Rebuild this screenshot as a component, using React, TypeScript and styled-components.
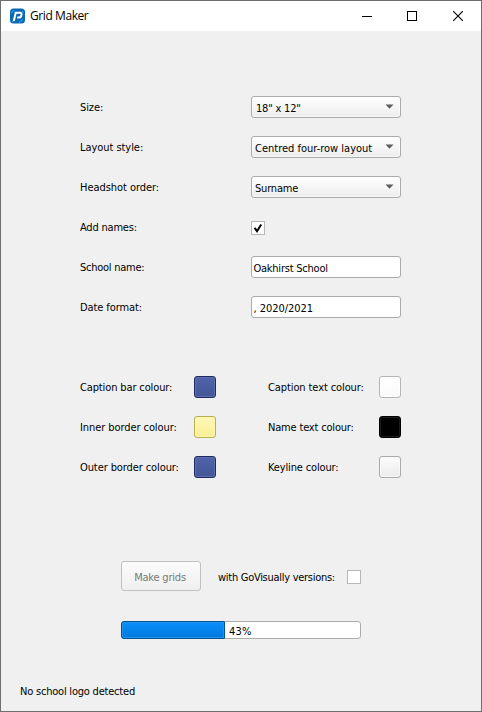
import React from "react";
import styled, { createGlobalStyle } from "styled-components";

const GlobalStyle = createGlobalStyle`
  * { box-sizing: border-box; }
  body { margin: 0; }
`;

const Window = styled.div`
  width: 482px;
  height: 712px;
  display: flex;
  flex-direction: column;
  border: 1px solid #6e6e6e;
  background: #f0f0f0;
  color: #000;
  font: 11px/14px "DejaVu Sans Condensed", "DejaVu Sans", sans-serif;
  font-stretch: condensed;
  white-space: nowrap;
`;

const TitleBar = styled.header`
  height: 30px;
  flex: none;
  display: flex;
  align-items: center;
  padding-left: 9px;
  background: #fff;
`;

const Title = styled.h1`
  flex: 1;
  margin: 0 0 0 5px;
  font: 400 12px/16px "Open Sans", "Noto Sans", sans-serif;
  letter-spacing: -0.42px;
`;

const WindowButton = styled.button<{ $width?: number }>`
  width: ${(p) => p.$width ?? 46}px;
  height: 30px;
  display: grid;
  place-items: center;
  padding: 0;
  border: 0;
  background: none;
`;

const Content = styled.main`
  flex: 1;
  display: flex;
  flex-direction: column;
  padding: 65px 80px 0 79px;
`;

const Form = styled.div`
  display: grid;
  grid-template-columns: 171px 150px;
  grid-auto-rows: 22px;
  row-gap: 18px;
  align-items: center;
`;

const Text = styled.span<{ $track?: number }>`
  letter-spacing: ${(p) => p.$track ?? 0}px;
`;

const Label = styled(Text)`
  padding-top: 2px;
`;

const Combo = styled.button<{ $indent?: number }>`
  height: 22px;
  display: flex;
  align-items: center;
  justify-content: space-between;
  padding: 4px 6px 0 ${(p) => p.$indent ?? 3}px;
  border: 1px solid #ababab;
  border-radius: 3px;
  background: linear-gradient(#fff, #ededed);
  box-shadow: inset 0 0 0 1px rgba(255, 255, 255, 0.5);
  color: #000;
  font: inherit;
  text-align: left;
`;

const Arrow = styled.svg`
  margin-top: -5px;
`;

const Input = styled.input<{ $track?: number }>`
  width: 150px;
  height: 22px;
  padding: 2px 2px 0 ${(p) => (p.$track ? 1.4 : 2)}px;
  border: 1px solid #ababab;
  border-radius: 3px;
  background: #fff;
  color: #000;
  font: inherit;
  letter-spacing: ${(p) => p.$track ?? 0}px;
  outline: none;
`;

const Check = styled.span`
  width: 14px;
  height: 14px;
  display: grid;
  place-items: center;
  margin-top: 2px;
  border: 1px solid #b7b7b7;
  background: #fff;
`;

const Colours = styled.div`
  display: grid;
  grid-template-columns: 114px 74px 111px 22px;
  grid-auto-rows: 22px;
  row-gap: 18px;
  align-items: center;
  margin-top: 58px;
`;

const Swatch = styled.button<{ $top: string; $bottom: string; $edge: string; $inner: string }>`
  width: 22px;
  height: 22px;
  padding: 0;
  border: 1px solid ${(p) => p.$edge};
  border-radius: 3px;
  background: linear-gradient(${(p) => p.$top}, ${(p) => p.$bottom});
  box-shadow: inset 0 0 0 1px ${(p) => p.$inner};
`;

const Actions = styled.div`
  display: flex;
  align-items: center;
  width: 240px;
  margin: 83px 0 0 41px;
`;

const MakeButton = styled.button`
  width: 80px;
  height: 30px;
  margin-right: 17px;
  padding: 3px 2px 0 0;
  border: 1px solid #c0c0c0;
  border-radius: 3px;
  background: linear-gradient(#fbfbfb, #efefef);
  color: #787878;
  font: inherit;
`;

const GoLabel = styled.div`
  flex: 1;
  padding-top: 3px;
`;

const Progress = styled.div`
  width: 240px;
  height: 18px;
  display: flex;
  margin: 30px 0 0 41px;
  border: 1px solid #ababab;
  border-radius: 3px;
  background: #fff;
`;

const Bar = styled.div`
  width: 104px;
  height: 18px;
  margin: -1px 4px 0 -1px;
  border: 1px solid #00528f;
  border-radius: 3px 1px 1px 3px;
  background: linear-gradient(#0a90fc, #0078dc);
  box-shadow: inset 0 0 0 1px #2494ee;
`;

const Percent = styled.span`
  line-height: 20px;
  letter-spacing: 0.2px;
`;

const Status = styled.footer`
  height: 26px;
  flex: none;
  padding-left: 19px;
`;

const BLUE = { $top: "#5164aa", $bottom: "#445698", $edge: "#1c2a60", $inner: "#5d6fae" };
const YELLOW = { $top: "#fff8b8", $bottom: "#f8ee94", $edge: "#b8ae54", $inner: "#fff7ac" };
const WHITE = { $top: "#ffffff", $bottom: "#fafafa", $edge: "#b5b5b5", $inner: "#ffffff" };
const BLACK = { $top: "#000", $bottom: "#000", $edge: "#000", $inner: "#1b1b1b" };
const GREY = { $top: "#fcfcfc", $bottom: "#ececec", $edge: "#ababab", $inner: "#f8f8f8" };

const DropArrow = () => (
  <Arrow width="9" height="5" viewBox="0 0 9 5">
    <path d="M0.5 0.5h8L4.5 4.7z" fill="#5b5b5b" />
  </Arrow>
);

export default function App() {
  return (
    <>
      <GlobalStyle />
      <Window>
        <TitleBar>
          <svg width="15" height="16" viewBox="0 0 15 16">
            <rect y="0.5" width="15" height="15" rx="3.5" fill="#0b69b4" />
            <path d="M1 5l3-3M9 14.5l4-3M12 3l1.5 2M2 13l1.5 1" stroke="#2b9be6" strokeWidth="1.2" />
            <path d="M3.8 13L5.7 4.8H10c1.7 0 1.7 1.2 1.4 2.4-.3 1.5-1 2.4-2.7 2.4H7.2" fill="none" stroke="#fff" strokeWidth="2" />
          </svg>
          <Title>Grid Maker</Title>
          <WindowButton $width={44} aria-label="Minimise">
            <svg width="10" height="10" shapeRendering="crispEdges"><path d="M0 5.5h10" stroke="#000" /></svg>
          </WindowButton>
          <WindowButton aria-label="Maximise">
            <svg width="10" height="10" shapeRendering="crispEdges"><path d="M.5.5h9v9h-9z" fill="none" stroke="#000" /></svg>
          </WindowButton>
          <WindowButton aria-label="Close">
            <svg width="10" height="10"><path d="M0 0l10 10M10 0L0 10" stroke="#000" strokeWidth="1.1" /></svg>
          </WindowButton>
        </TitleBar>
        <Content>
          <Form>
            <Label $track={-0.1}>Size:</Label>
            <Combo $indent={4}><Text $track={-0.2}>18" x 12"</Text><DropArrow /></Combo>
            <Label $track={-0.05}>Layout style:</Label>
            <Combo><Text>Centred four-row layout</Text><DropArrow /></Combo>
            <Label $track={-0.05}>Headshot order:</Label>
            <Combo><Text $track={-0.2}>Surname</Text><DropArrow /></Combo>
            <Label $track={-0.2}>Add names:</Label>
            <Check role="checkbox" aria-checked="true">
              <svg width="10" height="10" viewBox="0 0 10 10">
                <path d="M1.6 4.8L4 8.2 8.2 1.5" fill="none" stroke="#000" strokeWidth="2" />
              </svg>
            </Check>
            <Label $track={-0.25}>School name:</Label>
            <Input $track={-0.22} defaultValue="Oakhirst School" />
            <Label $track={-0.1}>Date format:</Label>
            <Input $track={-0.02} defaultValue=", 2020/2021" />
          </Form>
          <Colours>
            <Label $track={-0.13}>Caption bar colour:</Label><Swatch {...BLUE} />
            <Label $track={-0.1}>Caption text colour:</Label><Swatch {...WHITE} />
            <Label $track={-0.08}>Inner border colour:</Label><Swatch {...YELLOW} />
            <Label $track={-0.18}>Name text colour:</Label><Swatch {...BLACK} />
            <Label $track={-0.1}>Outer border colour:</Label><Swatch {...BLUE} />
            <Label $track={-0.15}>Keyline colour:</Label><Swatch {...GREY} />
          </Colours>
          <Actions>
            <MakeButton disabled><Text $track={-0.2}>Make grids</Text></MakeButton>
            <GoLabel><Text $track={-0.28}>with GoVisually versions:</Text></GoLabel>
            <Check role="checkbox" aria-checked="false" />
          </Actions>
          <Progress>
            <Bar />
            <Percent>43%</Percent>
          </Progress>
        </Content>
        <Status><Text $track={-0.21}>No school logo detected</Text></Status>
      </Window>
    </>
  );
}
